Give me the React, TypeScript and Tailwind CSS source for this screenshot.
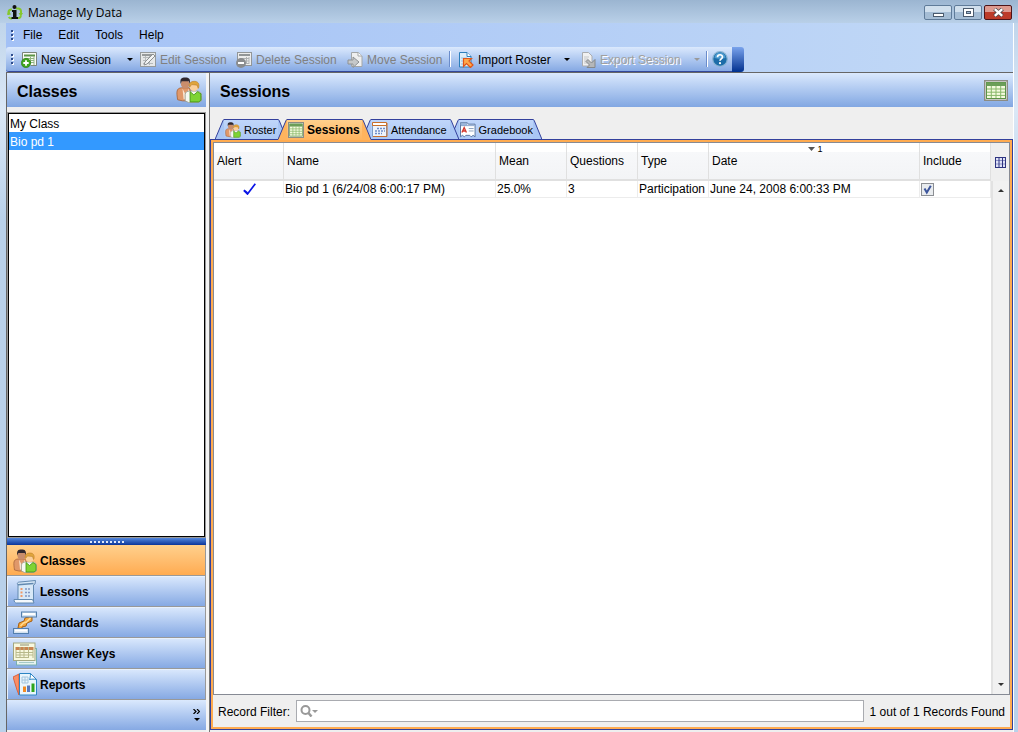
import type { ReactNode } from 'react'

type IconProps = { className?: string }

function AppLogo() {
  return (
    <svg className="h-4 w-4" viewBox="0 0 16 16" fill="none">
      <path d="M9 3.500h2.500a3 3 0 0 1 2.500 3v2M10 13h2a3 3 0 0 0 2-2.500M5 4.500H4a3 3 0 0 0-2.500 3V10M5 13.500H4A3 3 0 0 1 1.800 12" stroke="#86c72c" strokeWidth="2" />
      <path d="M11.500 8H16l-2.200 3.500zM0 9.500L2 6l2 3.500z" fill="#86c72c" />
      <circle cx="7.500" cy="2" r="2" fill="#111" />
      <path d="M5 5h4.500v7H11v2H4.500v-2H6V7H5z" fill="#111" />
    </svg>
  )
}

function PeopleIcon({ className = 'h-6 w-6' }: IconProps) {
  return (
    <svg className={className} viewBox="0 0 24 24">
      <path d="M1.500 21C.5 14 0 10.500 5 10h7l2 3v9H6z" fill="#e0986a" stroke="#a8663c" strokeWidth=".8" />
      <path d="M6 10.500l3 6 3-6v10H7z" fill="#f9e4d0" />
      <circle cx="8.500" cy="6.500" r="4" fill="#c98d6c" />
      <path d="M4.300 6.500C3.500 1.500 5 .5 8.500.5s5 1 4.300 6l-1-2.500H5.300z" fill="#2f272e" />
      <path d="M8.500 22v-6c0-2 2-3 4-3h7c3 0 4 2 4 4v5l-3 1.500h-9z" fill="#f6f8f2" stroke="#9a9f92" strokeWidth=".8" />
      <path d="M13 13.500l3.500 3 3.500-3 3 2v6l-2 1.500h-8z" fill="#7ed334" stroke="#3f9114" strokeWidth=".8" />
      <circle cx="16.700" cy="9" r="4" fill="#fbd09c" />
      <path d="M12.500 9.500c-1-4 1.500-5.500 4.500-5.500s4.800 2 4 5.500l-.500 1-1-3-5-.5z" fill="#e0a53c" stroke="#b5761f" strokeWidth=".5" />
    </svg>
  )
}

function SheetIcon({ className = 'h-4 w-4' }: IconProps) {
  return (
    <svg className={className} viewBox="0 0 24 21" preserveAspectRatio="none">
      <rect x=".75" y=".75" width="22.500" height="19.500" fill="#fff" stroke="#8c8c84" strokeWidth="1.500" />
      <rect x="2.500" y="2.500" width="19" height="16" fill="#f4fade" stroke="#5c9347" />
      <rect x="2.500" y="2.500" width="19" height="3.500" fill="#6b9e58" />
      <path d="M3 9h18M3 12.200h18M3 15.400h18M7.300 6v12M12 6v12M16.700 6v12" stroke="#87b769" />
    </svg>
  )
}

function NewSessionIcon() {
  return (
    <svg className="h-4 w-4" viewBox="0 0 16 16">
      <path d="M2 1v12h13V1z" fill="#fafcf6" />
      <path d="M3 2.500h11v2H3z" fill="#5b9348" />
      <path d="M4 6.500h9M5 8.500h8M8 10.500h5M9.500 5v7M13 4v9" stroke="#8fb481" />
      <path d="M1.500 14V.5h14v13H10" fill="none" stroke="#7b8578" />
      <circle cx="5" cy="11" r="4.700" fill="#3fa51f" stroke="#24780f" strokeWidth=".6" />
      <path d="M5 8.300v5.400M2.300 11h5.400" stroke="#fff" strokeWidth="1.800" />
    </svg>
  )
}

function EditIcon() {
  return (
    <svg className="h-4 w-4" viewBox="0 0 16 16" fill="none">
      <rect x=".5" y=".5" width="15" height="14" fill="#e6e8e8" stroke="#959a9c" />
      <path d="M2 3h12" stroke="#969a9b" strokeWidth="2" />
      <path d="M3 5.500h7M3 8.500h5M3 11.500h10M5.500 4v9M9.500 4v9" stroke="#b6babb" />
      <path d="M4 13l1-3 8-8 2 2-8 8z" fill="#f3f4f4" stroke="#8c9091" />
    </svg>
  )
}

function DeleteIcon() {
  return (
    <svg className="h-4 w-4" viewBox="0 0 16 16">
      <rect x="1.500" y=".5" width="14" height="13" fill="#ececec" stroke="#929698" />
      <path d="M3 3h11" stroke="#929698" strokeWidth="2" />
      <path d="M4 6.500h9M6 9h7M9 11.500h4M10.500 5v7M13 5v7" stroke="#aeb1b2" />
      <circle cx="5" cy="11" r="5" fill="#8a8c8e" />
      <path d="M2 11h6" stroke="#fff" strokeWidth="2" />
    </svg>
  )
}

function MoveIcon() {
  return (
    <svg className="h-4 w-4" viewBox="0 0 16 16">
      <path d="M4.500.5h7l3.500 3.500v10.500H4.500z" fill="#efefef" stroke="#a3a6a8" />
      <path d="M11 .5V4h4" fill="#fff" stroke="#a3a6a8" />
      <path d="M1 8h5V5l6 5-6 5.500V12H1z" fill="#c6c8c9" stroke="#8e9193" />
    </svg>
  )
}

function ImportIcon() {
  return (
    <svg className="h-4 w-4" viewBox="0 0 16 16">
      <path d="M1.500.5h7.500l4 4v10.500H1.500z" fill="#dcedf8" stroke="#2d7fbb" />
      <path d="M9 .5v4h4" fill="#fff" stroke="#2d7fbb" />
      <path d="M3 6h6M3 9h3M3 12h3" stroke="#9bc5e2" />
      <path d="M5.500 6.500h8l-2.500 2.500 4 4-2.500 2.500-4-4-3 3z" fill="#ffa94a" stroke="#e0561a" strokeWidth="1.200" />
    </svg>
  )
}

function ExportIcon() {
  return (
    <svg className="h-4 w-4" viewBox="0 0 16 16">
      <path d="M2.500.5h6l3.500 3.500v10H2.500z" fill="#f1f1f1" stroke="#abadb0" />
      <path d="M4 5h5M4 7h4M4 9h3M4 11h3" stroke="#c5c7c9" />
      <path d="M15 15.500H7l2.500-2.500L6 9.500l2-2 3.500 3.500L15 7.500z" fill="#b5b7b9" stroke="#85888b" />
    </svg>
  )
}

function HelpIcon() {
  return (
    <svg className="h-4 w-4" viewBox="0 0 16 16" fill="none">
      <circle cx="8" cy="8" r="7.300" fill="#1c6ca8" stroke="#8ab4d3" strokeWidth="1.200" />
      <path d="M2.500 7a5.500 5.500 0 0 1 11 0c-3 1-8 1-11 0z" fill="#4c9bd0" />
      <path d="M5.500 6.200C5.500 3 10.500 3 10.500 6c0 2-2.500 1.800-2.500 3.800" stroke="#fff" strokeWidth="1.700" />
      <circle cx="8" cy="12.200" r="1.100" fill="#fff" />
    </svg>
  )
}

function CalendarIcon() {
  return (
    <svg className="h-4 w-4" viewBox="0 0 16 16">
      <path d="M.5 3v11.500h14V3z" fill="#eef4fc" stroke="#7d9cc4" />
      <path d="M.5.5h14v3H.5z" fill="#fff" stroke="#c9702b" />
      <path d="M15 1v13.500H1" stroke="#c9702b" fill="none" />
      <path d="M5 6.500h8M3 9h10M3 11.500h7" stroke="#6d8cc8" strokeWidth="1.400" strokeDasharray="2 1" />
    </svg>
  )
}

function GradebookIcon() {
  return (
    <svg className="h-4 w-4" viewBox="0 0 16 16">
      <path d="M.5.5h7l1 1.500h7v13l-2-1.500-2 1.500-1.500-1.500H6L4.500 15l-2-1.500-2 1.500z" fill="#fff" stroke="#56749f" />
      <path d="M1 1h6v2H1zM1 3.500h14" fill="#a9c3e6" stroke="#8ba7ce" />
      <path d="M2 10.500L4.300 5.500l2.300 5M3 9h2.800" stroke="#d3362a" strokeWidth="1.400" fill="none" />
      <path d="M9 6.500h5M9 9h5" stroke="#8da2be" />
    </svg>
  )
}

function LessonsIcon() {
  return (
    <svg className="h-6 w-6" viewBox="0 0 24 24">
      <path d="M5 5C3.500 3 5 2 7 2L22.500.5 22 4l-1.500 1v17H5z" fill="#d8e8f7" stroke="#6289b0" />
      <path d="M5 4.800l15.500-1.300" stroke="#6289b0" strokeWidth="1.400" />
      <path d="M1 19.500h18.500L21 23H3.500C2 23 1 21.500 1 19.500z" fill="#f4f9fd" stroke="#6289b0" />
      <path d="M7.500 9h3M7.500 12.500h3M7.500 16h3" stroke="#ef9967" strokeWidth="1.800" strokeDasharray="2 1" />
      <path d="M12 9h6M12 12.500h6M12 16h6" stroke="#8096c2" strokeWidth="1.300" strokeDasharray="2 1" />
    </svg>
  )
}

function StandardsIcon() {
  return (
    <svg className="h-6 w-6" viewBox="0 0 24 24">
      <path d="M5 17l1-5 5-2 1-3 7-2v5l-5 2-1 3-4 1v2z" fill="#f5a63a" stroke="#a56014" />
      <path d="M7.500 15l3-3 3-1 4-4" stroke="#ffdb94" strokeWidth="1.500" fill="none" />
      <rect x="8.500" y="1" width="15" height="5" fill="#d3e2f1" stroke="#537fae" />
      <path d="M10 3h12" stroke="#fff" strokeWidth="2" />
      <rect x=".5" y="17.500" width="15" height="5" fill="#d3e2f1" stroke="#537fae" />
      <path d="M2 19.500h12" stroke="#fff" strokeWidth="2" />
    </svg>
  )
}

function AnswerKeysIcon() {
  return (
    <svg className="h-6 w-6" viewBox="0 0 24 24">
      <rect x="3.500" y="6.500" width="20" height="16.500" fill="#e7f3ef" stroke="#78b0b0" />
      <path d="M6 20.500h15" stroke="#a4c9c7" />
      <rect x=".5" y="1" width="21.500" height="17.500" fill="#f7f8df" stroke="#a3a781" />
      <path d="M7 3h9" stroke="#8c8e71" />
      <path d="M2.500 5h18v3h-18z" fill="#c9844f" />
      <path d="M3 10.500h17M3 13h17M3 15.500h12M7 5v11M11 5v11M15.500 5v11M20 8v8M3 8v8" stroke="#b8b98b" />
    </svg>
  )
}

function ReportsIcon() {
  return (
    <svg className="h-6 w-6" viewBox="0 0 24 24">
      <path d="M0 4l6-3v21L4 17z" fill="#f98e66" stroke="#d4522c" strokeWidth=".8" />
      <path d="M6.500.5h11l6 6V22h-17z" fill="#e9f5fd" stroke="#2c85c4" />
      <path d="M17.500.5c0 3-.5 5-1 6 2-.5 5-.5 7 0z" fill="#fff" stroke="#2c85c4" />
      <path d="M9 4h6v6H9zM12 4v6M9 7h6" stroke="#a5c5de" fill="none" />
      <path d="M11.500 13.500V19" stroke="#f28a23" strokeWidth="3" />
      <path d="M15.500 12.500V19" stroke="#5a78bb" strokeWidth="3" />
      <path d="M20 10.500V19" stroke="#2fa51c" strokeWidth="3" />
    </svg>
  )
}

function Caret({ className = 'text-black' }: IconProps) {
  return (
    <svg className={`h-[3px] w-[6px] shrink-0 ${className}`} viewBox="0 0 6 3">
      <path d="M0 0h6L3 3z" fill="currentColor" />
    </svg>
  )
}

function Grip() {
  return (
    <span className="flex flex-col gap-[2px]" aria-hidden="true">
      {[0, 1, 2].map((n) => (
        <span key={n} className="h-[2px] w-[2px] bg-[#2f4c8c] shadow-[1px_1px_0_#fff]"></span>
      ))}
    </span>
  )
}

function Separator() {
  return <span className="h-4 w-[2px] shrink-0 border-l border-[#6a8ccb] bg-white"></span>
}

type ToolProps = { label: string; icon: ReactNode; width: string; tone?: string; disabled?: boolean }

function ToolButton({ label, icon, width, tone = 'text-black', disabled }: ToolProps) {
  return (
    <button type="button" disabled={disabled} className={`flex shrink-0 items-center gap-1 whitespace-nowrap pt-px ${width} ${tone}`}>
      {icon}
      {label}
    </button>
  )
}

type TabProps = { label: string; icon: ReactNode; active?: boolean; width: string; layer: string }

function Tab({ label, icon, active, width, layer }: TabProps) {
  const fill = active ? '#ffb45e' : '#a9c6f4'
  return (
    <button type="button" role="tab" aria-selected={!!active} className={`relative flex h-[21px] items-stretch ${width} ${layer}`}>
      <svg className="h-full w-[9px] shrink-0" viewBox="0 0 9 21">
        <path d="M0 20.500L8 1.500Q8.500.5 9 .5V21H0z" fill={fill} />
        <path d="M0 20.500L8 1.500Q8.500.5 9 .5" fill="none" stroke="#33409c" />
      </svg>
      <span className={`flex min-w-0 flex-1 items-center gap-[3px] whitespace-nowrap border-t border-[#33409c] pl-px ${active ? 'bg-linear-to-b from-[#ffd08c] to-[#ffb45e] text-xs font-bold' : 'bg-linear-to-b from-[#c0d6fa] to-[#a9c6f4] text-[11px]'}`}>
        {icon}
        {label}
      </span>
      <svg className="h-full w-[9px] shrink-0" viewBox="0 0 9 21">
        <path d="M0 .5Q.8.500 1.200 1.500L9 20.500V21H0z" fill={fill} />
        <path d="M0 .5Q.8.500 1.200 1.500L9 20.500" fill="none" stroke="#33409c" />
      </svg>
      {!active && <span className="absolute inset-x-0 bottom-0 h-px bg-[#33409c]"></span>}
    </button>
  )
}

function TitleBar() {
  const button = 'flex h-[15px] w-7 items-center justify-center rounded-[2px] border'
  return (
    <header className="flex h-[23px] shrink-0 items-center bg-linear-to-b from-[#9bb5d1] to-[#b9d0e8] pl-[7px] pr-[6px] pt-[2px]">
      <AppLogo />
      <h1 className="ml-[5px] font-['Open_Sans',sans-serif] text-xs text-black">Manage My Data</h1>
      <div className="ml-auto flex gap-[2px]">
        <button type="button" aria-label="Minimize" className={`${button} border-[#5f7b99] bg-linear-to-b from-[#d0dfed] from-50% to-[#a5bdd5] to-50%`}>
          <span className="mt-1 h-1 w-[11px] border border-[#4b5b6e] bg-white"></span>
        </button>
        <button type="button" aria-label="Maximize" className={`${button} border-[#5f7b99] bg-linear-to-b from-[#d0dfed] from-50% to-[#a5bdd5] to-50%`}>
          <svg className="h-[9px] w-[11px]" viewBox="0 0 11 9">
            <rect x=".5" y=".5" width="10" height="8" fill="#fff" stroke="#4b5b6e" />
            <rect x="3.500" y="3.500" width="4" height="2" fill="#9fb9d3" stroke="#4b5b6e" />
          </svg>
        </button>
        <button type="button" aria-label="Close" className={`${button} border-[#4d1418] bg-linear-to-b from-[#de9a8f] from-50% to-[#bd3b29] to-50%`}>
          <svg className="h-[9px] w-[11px]" viewBox="0 0 11 9">
            <path d="M1.500 1l8 7M9.500 1l-8 7" stroke="#54494c" strokeWidth="4" />
            <path d="M1.800 1.200l7.400 6.600M9.200 1.200L1.800 7.800" stroke="#fff" strokeWidth="2.400" />
          </svg>
        </button>
      </div>
    </header>
  )
}

function Toolbar() {
  return (
    <div className="flex h-[25px] shrink-0">
      <div className="flex items-center rounded-l-[3px] border-b border-[#33489c] bg-linear-to-b from-[#dbe9fd] to-[#86a9e3] pl-[5px]">
        <Grip />
        <div className="ml-2 flex items-center">
          <ToolButton label="New Session" icon={<NewSessionIcon />} width="w-[106px]" />
          <button type="button" aria-label="New session options" className="w-[13px]"><Caret /></button>
          <ToolButton label="Edit Session" icon={<EditIcon />} width="w-24" tone="text-[#808080]" disabled />
          <ToolButton label="Delete Session" icon={<DeleteIcon />} width="w-[111px]" tone="text-[#808080]" disabled />
          <ToolButton label="Move Session" icon={<MoveIcon />} width="w-[102px]" tone="text-[#808080]" disabled />
          <Separator />
          <span className="w-[7px]"></span>
          <ToolButton label="Import Roster" icon={<ImportIcon />} width="w-[106px]" />
          <button type="button" aria-label="Import roster options" className="w-4"><Caret /></button>
          <ToolButton label="Export Session" icon={<ExportIcon />} width="w-[114px]" tone="text-[#a0a0a0] [text-shadow:1px_1px_0_#fff]" disabled />
          <button type="button" disabled aria-label="Export session options" className="w-3"><Caret className="text-[#999]" /></button>
          <Separator />
          <button type="button" aria-label="Help" className="mx-1"><HelpIcon /></button>
        </div>
      </div>
      <div className="w-3 rounded-r-[3px] bg-linear-to-b from-[#7aa3ec] to-[#00308f]"></div>
    </div>
  )
}

function PanelHeader({ title, icon }: { title: string; icon: ReactNode }) {
  return (
    <div className="flex h-[34px] shrink-0 items-center justify-between bg-linear-to-b from-[#dbe9fd] to-[#82a7e2]">
      <h2 className="pl-[10px] pt-[3px] text-base font-bold text-black">{title}</h2>
      {icon}
    </div>
  )
}

const classes = ['My Class', 'Bio pd 1']

const navItems = [
  { label: 'Classes', icon: <PeopleIcon /> },
  { label: 'Lessons', icon: <LessonsIcon /> },
  { label: 'Standards', icon: <StandardsIcon /> },
  { label: 'Answer Keys', icon: <AnswerKeysIcon /> },
  { label: 'Reports', icon: <ReportsIcon /> },
]

function Sidebar() {
  return (
    <aside className="flex w-[200px] shrink-0 flex-col border-l border-[#666] bg-[#efefef] pb-[2px]">
      <PanelHeader title="Classes" icon={<PeopleIcon className="mr-1 h-[26px] w-[26px]" />} />
      <div className="mt-[5px] flex-1 border border-[#999]">
        <ul className="h-full border border-black bg-white">
          {classes.map((name) => (
            <li key={name}>
              <button type="button" className={`block h-[18px] w-full pl-px pt-px text-left ${name === 'Bio pd 1' ? 'bg-[#3399ff] text-white' : ''}`}>{name}</button>
            </li>
          ))}
        </ul>
      </div>
      <div className="flex h-[7px] items-center justify-center gap-[2px] bg-linear-to-b from-[#5487dc] to-[#0b349a]">
        {[0, 1, 2, 3, 4, 5, 6, 7, 8].map((n) => (
          <span key={n} className="h-[2px] w-[2px] bg-[#dfe9fa]"></span>
        ))}
      </div>
      <nav>
        {navItems.map(({ label, icon }, i) => (
          <button
            key={label}
            type="button"
            className={`flex h-[31px] w-full items-center gap-[3px] border-b border-r border-[#999] pl-[6px] pt-px font-bold shadow-[inset_1px_1px_0_#e8f1fd] ${i === 0 ? 'bg-linear-to-b from-[#ffd08c] to-[#ffab50] shadow-none' : 'bg-linear-to-b from-[#dbe9fd] to-[#86a9e3]'}`}
          >
            {icon}
            {label}
          </button>
        ))}
      </nav>
      <div className="flex h-[30px] items-center justify-end bg-linear-to-b from-[#dbe9fd] to-[#86a9e3] pr-[6px]">
        <button type="button" aria-label="More panels" className="flex flex-col items-center gap-1">
          <svg className="h-[5px] w-[7px]" viewBox="0 0 7 5" fill="none">
            <path d="M.5 0L3 2.500.5 5M4 0l2.500 2.500L4 5" stroke="#000" strokeWidth="1.200" />
          </svg>
          <Caret />
        </button>
      </div>
    </aside>
  )
}

const columns = [
  { label: 'Alert', width: 'w-[70px]' },
  { label: 'Name', width: 'w-[212px]' },
  { label: 'Mean', width: 'w-[71px]' },
  { label: 'Questions', width: 'w-[71px]' },
  { label: 'Type', width: 'w-[71px]' },
  { label: 'Date', width: 'w-auto' },
  { label: 'Include', width: 'w-[71px]' },
]

function SessionsTable() {
  const cell = 'h-[17px] whitespace-nowrap border-b border-r border-[#ececec] p-0 pl-px'
  return (
    <table className="w-full table-fixed border-separate border-spacing-0 text-left">
      <thead>
        <tr>
          {columns.map(({ label, width }) => (
            <th key={label} className={`h-[38px] border-b-2 border-r border-[#e0e0e0] bg-linear-to-b from-white from-[9px] via-[#f7f8fa] via-[9px] to-[#f3f4f6] p-0 pl-[3px] font-normal ${width}`}>
              <span className="relative block">
                {label}
                {label === 'Date' && (
                  <span className="absolute inset-x-0 -top-[10px] flex items-center justify-center gap-[2px] text-[9px] leading-3">
                    <svg className="h-1 w-[7px]" viewBox="0 0 7 4">
                      <path d="M0 0h7L3.500 4z" fill="#555" />
                    </svg>
                    1
                  </span>
                )}
              </span>
            </th>
          ))}
        </tr>
      </thead>
      <tbody>
        <tr>
          <td className={cell}>
            <svg className="mx-auto h-3 w-[13px]" viewBox="0 0 13 12" fill="none" role="img" aria-label="OK">
              <path d="M.8 7.500L4.500 11 12.300.8" stroke="#0a14e6" strokeWidth="1.700" />
              <path d="M1 7l3 2.500.500 1.500" stroke="#0a14e6" strokeWidth="1.500" />
            </svg>
          </td>
          <td className={cell}>Bio pd 1 (6/24/08 6:00:17 PM)</td>
          <td className={cell}>25.0%</td>
          <td className={cell}>3</td>
          <td className={cell}>Participation</td>
          <td className={cell}>June 24, 2008 6:00:33 PM</td>
          <td className={cell}>
            <label className="relative block h-[13px] w-[13px]">
              <input type="checkbox" defaultChecked aria-label="Include session" className="peer block h-[13px] w-[13px] appearance-none border border-[#8c8f94] bg-[#e9ecef]" />
              <svg className="pointer-events-none absolute inset-0 hidden h-[13px] w-[13px] peer-checked:block" viewBox="0 0 13 13" fill="none">
                <path d="M3.500 5.500L5.800 9.500 9.800 2.800" stroke="#3c559c" strokeWidth="2" />
              </svg>
            </label>
          </td>
        </tr>
      </tbody>
    </table>
  )
}

function ScrollColumn() {
  return (
    <div className="flex w-[18px] shrink-0 flex-col items-center bg-[#efefef]">
      <button type="button" aria-label="Choose columns" className="flex h-[38px] items-center justify-center">
        <svg className="h-[11px] w-[11px]" viewBox="0 0 11 11">
          <rect x=".5" y=".5" width="10" height="10" fill="#dfe2f7" stroke="#2f3480" />
          <path d="M1 3.500h9M1 7h9" stroke="#8e93c8" />
          <path d="M4 0v11M7.500 0v11" stroke="#2f3480" />
        </svg>
      </button>
      <div className="flex w-full flex-1 flex-col items-center justify-between border-l-2 border-[#e2e2e2] bg-[#f1f1f1] py-2">
        <button type="button" aria-label="Scroll up" className="block"><Caret className="rotate-180 text-[#333]" /></button>
        <button type="button" aria-label="Scroll down" className="block"><Caret className="text-[#333]" /></button>
      </div>
    </div>
  )
}

function SessionsPanel() {
  return (
    <main className="flex min-w-0 flex-1 flex-col bg-[#efefef] pb-[2px]">
      <PanelHeader title="Sessions" icon={<SheetIcon className="mr-[5px] h-[21px] w-6" />} />
      <div role="tablist" className="relative z-10 -mb-px mt-3 flex pl-[5px]">
        <Tab label="Roster" icon={<PeopleIcon className="h-4 w-4" />} width="w-[72px]" layer="z-10" />
        <Tab label="Sessions" icon={<SheetIcon />} active width="w-[93px]" layer="-ml-[9px] z-30" />
        <Tab label="Attendance" icon={<CalendarIcon />} width="w-[97px]" layer="-ml-[9px] z-20" />
        <Tab label="Gradebook" icon={<GradebookIcon />} width="w-[92px]" layer="-ml-[9px] z-10" />
      </div>
      <div className="flex flex-1 flex-col border border-[#33409c] bg-[#ffab50] p-[2px]">
        <div className="flex flex-1 border border-[#868a94] bg-white">
          <div className="min-w-0 flex-1">
            <SessionsTable />
          </div>
          <ScrollColumn />
        </div>
        <div className="flex h-8 shrink-0 items-center gap-[6px] bg-[#efefef] px-[5px]">
          <label htmlFor="record-filter" className="whitespace-nowrap pt-px">Record Filter:</label>
          <div className="relative h-[22px] flex-1">
            <input id="record-filter" type="text" className="block h-full w-full border border-[#a9abb0] bg-white pl-6 outline-none" />
            <svg className="pointer-events-none absolute left-1 top-[5px] h-3 w-[18px]" viewBox="0 0 18 12" fill="none">
              <circle cx="5.500" cy="5" r="4" stroke="#999" strokeWidth="2" />
              <path d="M8.500 8l3 3.500" stroke="#999" strokeWidth="2.500" />
              <path d="M12 5h6l-3 3z" fill="#999" />
            </svg>
          </div>
          <output className="whitespace-nowrap pt-px">1 out of 1 Records Found</output>
        </div>
      </div>
    </main>
  )
}

export default function App() {
  return (
    <div className="flex h-screen flex-col bg-linear-to-b from-[#b9d0e8] via-[#dbe8f6] via-15% to-[#b9d1ea] to-30% font-['Liberation_Sans',Arial,sans-serif] text-xs text-black">
      <TitleBar />
      <div className="ml-[6px] mr-1 flex min-h-0 flex-1 flex-col border-r border-white bg-linear-to-r from-[#a3c1f6] to-[#c2d9f6]">
        <nav className="flex h-6 shrink-0 items-center pl-[5px]">
          <Grip />
          <div className="ml-[10px] flex gap-4">
            {['File', 'Edit', 'Tools', 'Help'].map((item) => (
              <button key={item} type="button">{item}</button>
            ))}
          </div>
        </nav>
        <Toolbar />
        <div className="flex min-h-0 flex-1 border-t border-[#666]">
          <Sidebar />
          <div className="w-1 shrink-0 border-r border-[#777] bg-[#f4f4f4]"></div>
          <SessionsPanel />
        </div>
      </div>
    </div>
  )
}
